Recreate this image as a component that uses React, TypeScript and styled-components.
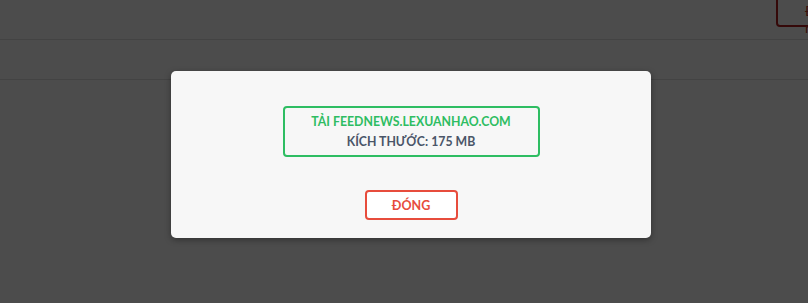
import React from "react";
import styled, { createGlobalStyle } from "styled-components";

const Global = createGlobalStyle`
  html, body { margin: 0; padding: 0; overflow: hidden; }
  body { background: #ffffff; font-family: Lato, "Open Sans", "Noto Sans", sans-serif; }
  #root { width: 808px; height: 303px; position: relative; overflow: hidden; }
`;

const Page = styled.div`
  width: 100%;
  height: 303px;
  background: #ffffff;
`;

const Header = styled.div`
  height: 40px;
  box-sizing: border-box;
  border-bottom: 1px solid #e2e2e2;
  display: flex;
  justify-content: flex-end;
  align-items: flex-start;
`;

const HeaderButton = styled.button`
  margin-top: -6px;
  margin-right: -60px;
  width: 92px;
  height: 33px;
  box-sizing: border-box;
  border: 2px solid #b21e1e;
  border-radius: 4px;
  background: #ffffff;
  color: #c0392b;
  font-family: Lato, "Open Sans", sans-serif;
  font-size: 14px;
  text-align: left;
  padding: 6px 0 0 27px;
`;

const SubBar = styled.div`
  height: 40px;
  box-sizing: border-box;
  border-bottom: 1px solid #e2e2e2;
`;

const Overlay = styled.div`
  position: absolute;
  inset: 0;
  background: rgba(0, 0, 0, 0.7);
  display: flex;
  justify-content: center;
  align-items: flex-start;
  padding: 71px 0 0 14px;
`;

const Modal = styled.div`
  width: 480px;
  height: 167px;
  box-sizing: border-box;
  background: #f7f7f7;
  border-radius: 5px;
  box-shadow: 0 2px 6px rgba(0, 0, 0, 0.35);
  display: flex;
  flex-direction: column;
  align-items: center;
  padding-top: 35px;
`;

const InfoBox = styled.div`
  width: 257px;
  height: 51px;
  box-sizing: border-box;
  border: 2px solid #2ebd62;
  border-radius: 4px;
  display: flex;
  flex-direction: column;
  align-items: center;
  justify-content: center;
  font-family: Lato, "Open Sans", sans-serif;
  font-size: 12.3px;
  font-weight: 700;
  line-height: 20px;
`;

const Line = styled.div<{ $tone: "green" | "slate" }>`
  color: ${(p) => (p.$tone === "green" ? "#2ebd62" : "#4a5568")};
  white-space: nowrap;
`;

const CloseButton = styled.button`
  margin-top: 33px;
  width: 93px;
  height: 30px;
  box-sizing: border-box;
  border: 2px solid #e74c3c;
  border-radius: 4px;
  background: #ffffff;
  color: #e74c3c;
  font-family: Lato, "Open Sans", sans-serif;
  font-size: 12.5px;
  font-weight: 700;
  padding: 0;
`;

export default function App() {
  return (
    <>
      <Global />
      <Page>
        <Header>
          <HeaderButton>Đăng nhập</HeaderButton>
        </Header>
        <SubBar />
      </Page>
      <Overlay>
        <Modal>
          <InfoBox>
            <Line $tone="green">TẢI FEEDNEWS.LEXUANHAO.COM</Line>
            <Line $tone="slate">KÍCH THƯỚC: 175 MB</Line>
          </InfoBox>
          <CloseButton>ĐÓNG</CloseButton>
        </Modal>
      </Overlay>
    </>
  );
}
